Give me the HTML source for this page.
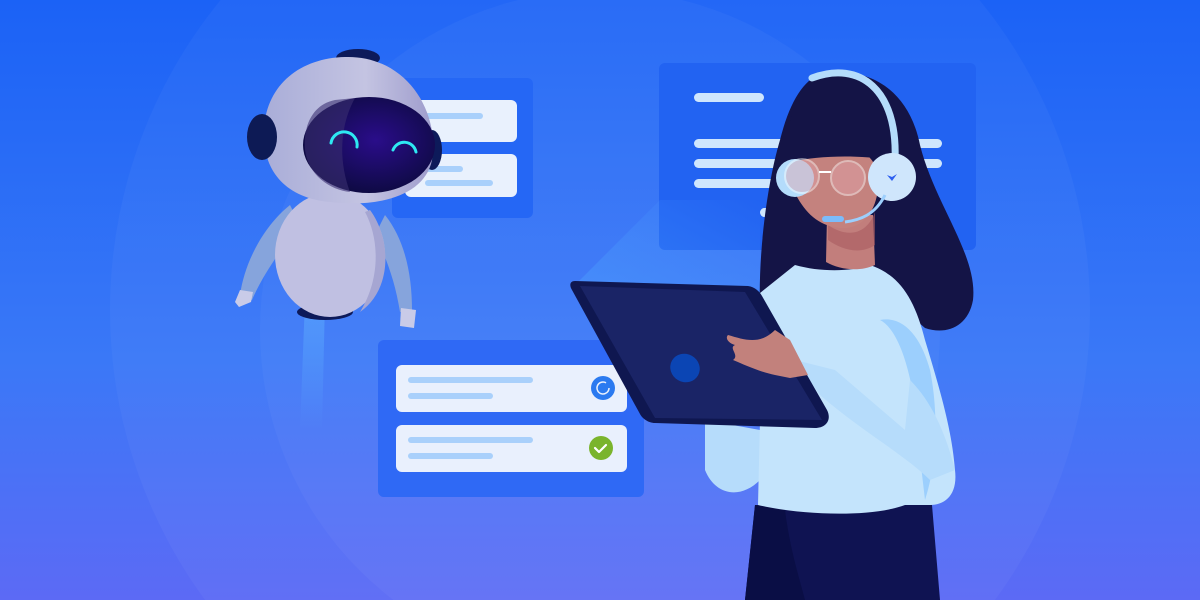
<!DOCTYPE html>
<html><head><meta charset="utf-8"><style>html,body{margin:0;padding:0;width:1200px;height:600px;overflow:hidden}svg{display:block}</style></head>
<body>
<svg width="1200" height="600" viewBox="0 0 1200 600" xmlns="http://www.w3.org/2000/svg">
<defs>
<linearGradient id="bg" x1="0" y1="0" x2="0" y2="1">
<stop offset="0" stop-color="#1b62f6"/><stop offset="0.6" stop-color="#3a78f7"/><stop offset="1" stop-color="#5c6af5"/></linearGradient>
<radialGradient id="visor" cx="0.55" cy="0.45" r="0.6"><stop offset="0" stop-color="#2a0d8a"/><stop offset="1" stop-color="#0c0a3e"/></radialGradient>
<linearGradient id="beam" x1="0" y1="0" x2="0" y2="1"><stop offset="0" stop-color="#5fb0ff" stop-opacity="0.8"/><stop offset="1" stop-color="#5fb0ff" stop-opacity="0"/></linearGradient>
<linearGradient id="light" x1="1" y1="0" x2="0" y2="1"><stop offset="0" stop-color="#4fa6ff" stop-opacity="0"/><stop offset="1" stop-color="#4fa6ff" stop-opacity="0.7"/></linearGradient>
<linearGradient id="head" x1="0" y1="0" x2="1" y2="0"><stop offset="0" stop-color="#a9add8"/><stop offset="0.6" stop-color="#c4c4e2"/><stop offset="1" stop-color="#9e9ccc"/></linearGradient>
</defs>
<rect width="1200" height="600" fill="url(#bg)"/>
<circle cx="600" cy="310" r="490" fill="#ffffff" opacity="0.035"/>
<circle cx="600" cy="330" r="340" fill="#ffffff" opacity="0.035"/>

<rect x="392" y="78" width="141" height="140" rx="6" fill="#2567f5"/>
<rect x="405" y="100" width="112" height="42" rx="6" fill="#e9f1fd"/>
<rect x="425" y="113" width="58" height="6" rx="3" fill="#a9d0fb"/>
<rect x="405" y="154" width="112" height="43" rx="6" fill="#e9f1fd"/>
<rect x="425" y="166" width="38" height="6" rx="3" fill="#a9d0fb"/>
<rect x="425" y="180" width="68" height="6" rx="3" fill="#a9d0fb"/>

<rect x="659" y="63" width="317" height="187" rx="6" fill="#2263f2"/>
<rect x="694" y="93" width="70" height="9" rx="4.5" fill="#cfe6fd"/>
<rect x="694" y="139" width="248" height="9" rx="4.5" fill="#cfe6fd"/>
<rect x="694" y="159" width="248" height="9" rx="4.5" fill="#cfe6fd"/>
<rect x="694" y="179" width="110" height="9" rx="4.5" fill="#cfe6fd"/>
<rect x="760" y="208" width="30" height="9" rx="4.5" fill="#cfe6fd"/>

<polygon points="575,285 660,200 760,200 760,300" fill="url(#light)" opacity="0.6"/>

<rect x="378" y="340" width="266" height="157" rx="6" fill="#2f69f5"/>
<rect x="396" y="365" width="231" height="47" rx="6" fill="#e9f0fd"/>
<rect x="408" y="377" width="125" height="6" rx="3" fill="#a9d0fb"/>
<rect x="408" y="393" width="85" height="6" rx="3" fill="#a9d0fb"/>
<circle cx="603" cy="388" r="12" fill="#2b7af0"/>
<path d="M609 388 a6 6 0 1 1 -3 -5.2" fill="none" stroke="#e9f0fd" stroke-width="1.5"/>
<rect x="396" y="425" width="231" height="47" rx="6" fill="#e9f0fd"/>
<rect x="408" y="437" width="125" height="6" rx="3" fill="#a9d0fb"/>
<rect x="408" y="453" width="85" height="6" rx="3" fill="#a9d0fb"/>
<circle cx="601" cy="448" r="12" fill="#7ab42c"/>
<path d="M595 448 l4 4 l7 -7" fill="none" stroke="#fff" stroke-width="2.2" stroke-linecap="round" stroke-linejoin="round"/>

<!-- robot -->
<path d="M305 300 L325 300 L322 430 L300 430 Z" fill="url(#beam)" opacity="0.7"/>
<path d="M290 205 C265 225 245 260 240 295 L252 300 C265 270 285 245 300 225 Z" fill="#86a4dc"/>
<path d="M385 215 C405 240 412 275 412 310 L400 312 C395 280 385 255 375 235 Z" fill="#86a4dc"/>
<path d="M240 290 l-5 12 l4 5 l12 -5 l2 -10z" fill="#c9cbe8"/>
<path d="M401 308 l-1 18 l14 2 l2 -18z" fill="#c9cbe8"/>
<ellipse cx="325" cy="312" rx="28" ry="8" fill="#0d1a5a"/>
<ellipse cx="330" cy="255" rx="55" ry="62" fill="#c0c0e2"/>
<path d="M370 210 C392 240 392 290 360 312 C380 280 380 240 365 212Z" fill="#a6a6d2"/>
<ellipse cx="358" cy="58" rx="22" ry="9" fill="#0d1a5a"/>
<ellipse cx="432" cy="150" rx="10" ry="20" fill="#0d1a5a"/>
<path d="M345 57 C405 55 440 110 432 160 C425 195 380 208 330 202 C285 198 262 170 264 130 C266 85 300 58 345 57Z" fill="url(#head)"/>
<ellipse cx="262" cy="137" rx="15" ry="23" fill="#0d1a55"/>
<ellipse cx="369" cy="145" rx="66" ry="48" fill="url(#visor)"/>
<path d="M335 100 C310 105 303 130 305 150 C308 175 330 190 350 192 C338 160 340 125 355 98Z" fill="#3a2e72" opacity="0.6"/>
<path d="M331 143 a13 13 0 0 1 26 4" fill="none" stroke="#2ee8f2" stroke-width="3" stroke-linecap="round"/>
<path d="M393 150 a12 12 0 0 1 23 2" fill="none" stroke="#2ee8f2" stroke-width="3" stroke-linecap="round"/>

<!-- woman: hair back -->
<path d="M823 73 C875 66 910 95 920 145 C935 205 978 255 973 300 C968 328 945 335 925 328 L870 280 L760 310 C758 250 768 180 780 140 C790 100 805 78 823 73Z" fill="#141446"/>
<!-- pants -->
<path d="M755 505 L932 505 L940 600 L745 600Z" fill="#0f1352"/>
<path d="M785 510 C790 550 800 580 805 600 L745 600 L755 505Z" fill="#0a0e45"/>
<!-- back sleeve -->
<path d="M705 420 L760 430 L760 480 C740 500 715 495 705 470 Z" fill="#b6dcfb"/>
<!-- shirt -->
<path d="M795 265 C820 272 850 272 870 265 C900 275 915 300 925 340 C940 390 952 430 955 470 C958 495 945 505 930 505 L905 505 C870 518 800 515 758 505 L760 420 L745 400 L760 293 Z" fill="#c4e4fc"/>
<path d="M880 320 C900 330 915 380 918 440 L925 500 C935 470 940 420 930 370 C922 340 905 315 880 320Z" fill="#9ccffd"/>
<path d="M795 360 L820 395 C860 430 905 455 930 480 L955 470 C945 430 930 400 910 380 L905 430 L835 370Z" fill="#b6dcfb"/>
<!-- neck & face -->
<path d="M827 215 L873 215 L875 265 C860 272 840 270 826 262Z" fill="#c27e7c"/>
<path d="M828 225 C850 240 868 232 875 212 L875 245 C860 255 842 250 828 240Z" fill="#a95c60" opacity="0.6"/>
<path d="M792 165 C792 148 820 142 845 146 C870 150 880 165 878 188 C876 212 862 230 840 228 C818 226 805 212 796 195Z" fill="#c4827e"/>
<!-- hair front -->
<path d="M823 73 C858 70 888 92 893 130 L892 160 C860 155 820 155 790 162 C783 120 800 80 823 73Z" fill="#141446"/>
<!-- headset -->
<path d="M812 78 C860 60 898 90 895 160" fill="none" stroke="#b4dcfb" stroke-width="7" stroke-linecap="round"/>
<circle cx="795" cy="178" r="19" fill="#b4dcfb"/>
<circle cx="892" cy="177" r="24" fill="#cfe6fc"/>
<path d="M887 175 l5 6 l5 -7 l-5 3z" fill="#2d5ff0"/>
<path d="M885 195 C875 215 860 220 845 222" fill="none" stroke="#9ccffd" stroke-width="3"/>
<rect x="822" y="216" width="22" height="6" rx="3" fill="#7bbcfb"/>
<circle cx="802" cy="176" r="17" fill="#e4a7ad" opacity="0.45" stroke="#fff" stroke-width="2"/>
<circle cx="848" cy="178" r="17" fill="#e4a7ad" opacity="0.45" stroke="#fff" stroke-width="2"/>
<line x1="819" y1="172" x2="831" y2="172" stroke="#fff" stroke-width="2"/>
<!-- tablet -->
<path d="M575 281 L748 286 C755 287 760 292 762 296 L827 410 C832 420 826 428 815 428 L655 423 C648 423 642 418 640 414 L572 290 C569 285 570 281 575 281Z" fill="#0f1750"/>
<path d="M580 286 L745 292 L822 420 L655 418 Z" fill="#1a2466"/>
<ellipse cx="685" cy="368" rx="15" ry="14" transform="rotate(30 685 368)" fill="#0b45b4"/>
<!-- hand -->
<path d="M728 335 C745 340 760 345 775 330 L790 340 L808 375 L790 378 L775 375 C760 372 745 365 733 360 C740 355 728 348 735 345 C728 343 725 338 728 335Z" fill="#c2817c"/>
</svg>
</body></html>
